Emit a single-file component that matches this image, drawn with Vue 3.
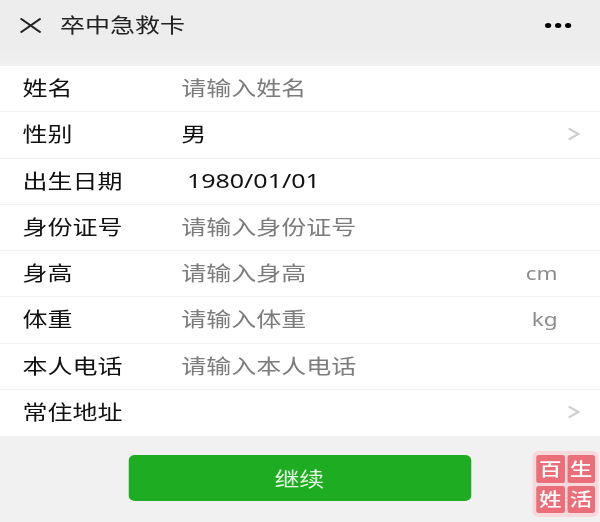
<template>
  <div class="page">
    <header class="top">
      <svg class="close" width="17" height="15" viewBox="0 0 17 15">
        <path d="M0.5 0.5 L16.5 14.5 M16.5 0.5 L0.5 14.5" stroke="#222" stroke-width="1.8" fill="none" />
      </svg>
      <span class="title">卒中急救卡</span>
      <span class="dots"><i></i><i></i><i></i></span>
    </header>

    <section class="form">
      <div class="row" v-for="row in rows" :key="row.label">
        <span class="label">{{ row.label }}</span>
        <span class="value" :class="{ filled: row.filled, date: row.date }">{{ row.text }}</span>
        <span v-if="row.unit" class="unit">{{ row.unit }}</span>
        <svg v-if="row.arrow" class="arrow" width="10" height="14" viewBox="0 0 10 14">
          <path d="M1 1.5 L8.5 7 L1 12.5" stroke="#cdcdcd" stroke-width="2" fill="none" />
        </svg>
      </div>
    </section>

    <footer class="bottom">
      <button class="next">继续</button>
    </footer>

    <div class="stamp">
      <span>百</span><span>生</span><span>姓</span><span>活</span>
    </div>
  </div>
</template>

<script setup>
const rows = [
  { label: '姓名', text: '请输入姓名' },
  { label: '性别', text: '男', filled: true, arrow: true },
  { label: '出生日期', text: '1980/01/01', filled: true, date: true },
  { label: '身份证号', text: '请输入身份证号' },
  { label: '身高', text: '请输入身高', unit: 'cm' },
  { label: '体重', text: '请输入体重', unit: 'kg' },
  { label: '本人电话', text: '请输入本人电话' },
  { label: '常住地址', text: '', arrow: true }
]
</script>

<style>
html,
body {
  margin: 0;
  background: #f1f1f1;
  overflow: hidden;
}
</style>

<style scoped>
/* the screenshot is stretched sideways, so lay out at 480 and widen by 1.25 */
.page {
  position: relative;
  width: 480px;
  height: 522px;
  transform: scaleX(1.25);
  transform-origin: left top;
  font-family: "Noto Sans", "Noto Sans CJK SC", sans-serif;
  background: #f1f1f1;
  filter: blur(0.5px);
}

.top {
  height: 66px;
  box-sizing: border-box;
  padding: 0 23px 16px 16px;
  display: flex;
  align-items: center;
  background: linear-gradient(#ededed 0, #ededed 50px, #f1f1f1 66px);
}

.close {
  flex: none;
}

.title {
  margin-left: 15px;
  margin-top: -2px;
  font-size: 20px;
  color: #222;
}

.dots {
  margin-left: auto;
  display: flex;
  gap: 2.8px;
}

.dots i {
  width: 5px;
  height: 5px;
  border-radius: 50%;
  background: #000;
}

.form {
  background: #fff;
}

.row {
  height: 46.25px;
  box-sizing: border-box;
  padding: 0 16px 2px 18px;
  display: flex;
  align-items: center;
  border-bottom: 1px solid #f3f3f3;
  font-size: 20px;
}

.row:last-child {
  border-bottom: none;
}

.label {
  width: 127px;
  flex: none;
  color: #111;
}

.value {
  flex: 1;
  color: #7c7c7c;
}

.value.filled {
  color: #111;
}

.value.date {
  padding-left: 4.5px;
}

.unit {
  margin-right: 18px;
  font-size: 18px;
  color: #8c8c8c;
}

.arrow {
  flex: none;
}

.bottom {
  padding-top: 19px;
  display: flex;
  justify-content: center;
  margin-left: -1px;
}

.next {
  width: 274px;
  height: 46px;
  border: none;
  border-radius: 5px;
  background: #1ead22;
  color: #e8f6e6;
  font-family: inherit;
  font-size: 20px;
}

.stamp {
  position: absolute;
  left: 426px;
  top: 451px;
  width: 53px;
  height: 66px;
  box-sizing: border-box;
  padding: 4px 3px;
  display: grid;
  grid-template-columns: 1fr 1fr;
  grid-template-rows: 1fr 1fr;
  gap: 3px 2px;
  border-radius: 5px;
  background: #f8d9dc;
}

.stamp span {
  display: flex;
  align-items: center;
  justify-content: center;
  border-radius: 2px;
  background: #ea6f79;
  color: #fff;
  font-size: 18px;
  font-weight: 500;
  line-height: 1;
}
</style>
